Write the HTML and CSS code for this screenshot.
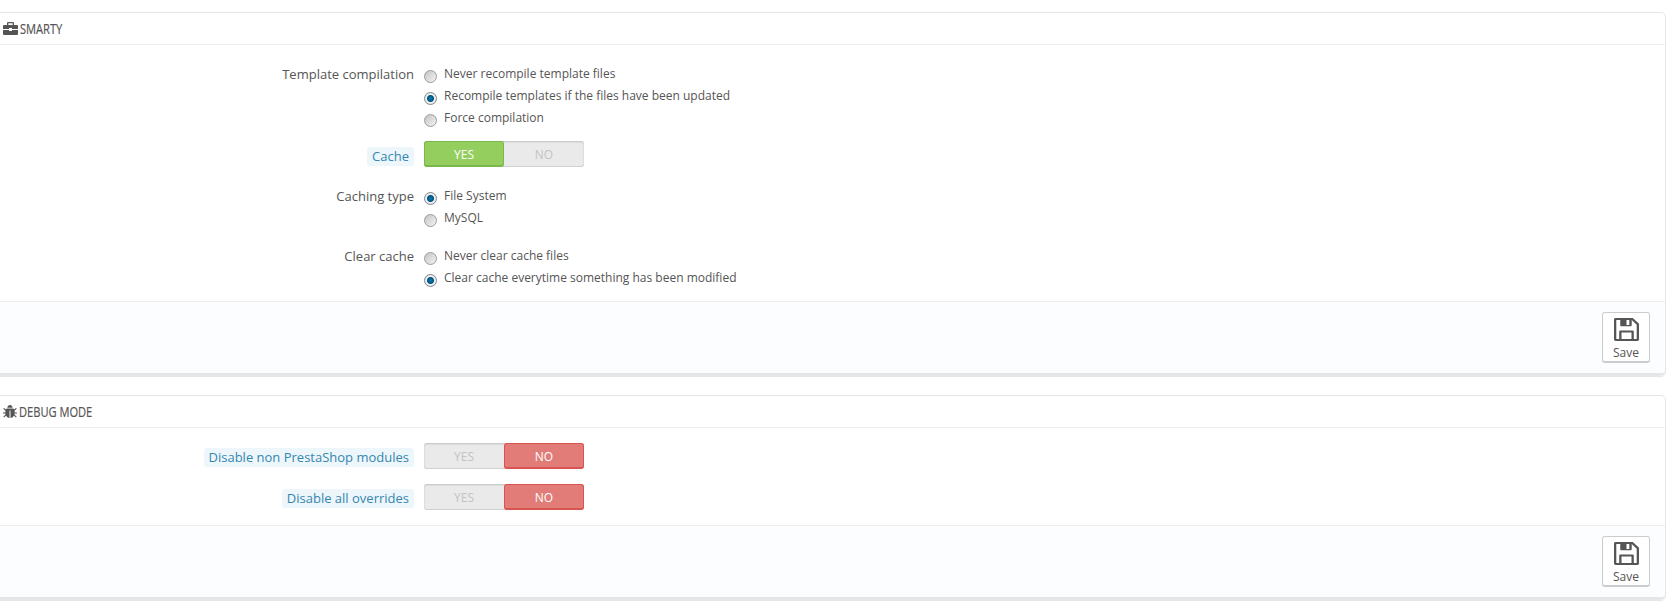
FILE: index.html
```html
<!DOCTYPE html>
<html>
<head>
    <meta charset="UTF-8">
    <title>Performance</title>
    <link rel="stylesheet" href="styles.css">
</head>
<body>
<div class="panel panel-smarty">
    <h3 class="panel-heading">
        <svg class="head-icon" width="15" height="13" viewBox="0 0 15 13"><path d="M5 0h5a1 1 0 0 1 1 1v2h3a1 1 0 0 1 1 1v3H9V6H6v1H0V4a1 1 0 0 1 1-1h3V1a1 1 0 0 1 1-1zm.3 1.3V3h4.400V1.300zM0 8h6v1h3V8h6v4a1 1 0 0 1-1 1H1a1 1 0 0 1-1-1z"/></svg>
        <span class="head-text">SMARTY</span>
    </h3>
    <div class="form-body">
        <div class="row row-radio">
            <label class="row-label">Template compilation</label>
            <div class="radio-list">
                <div class="radio"><input type="radio" name="compile"><span>Never recompile template files</span></div>
                <div class="radio"><input type="radio" name="compile" checked><span>Recompile templates if the files have been updated</span></div>
                <div class="radio"><input type="radio" name="compile"><span>Force compilation</span></div>
            </div>
        </div>
        <div class="row row-switch">
            <label class="row-label"><span class="hint">Cache</span></label>
            <div class="switch">
                <span class="opt on-yes">YES</span>
                <span class="opt">NO</span>
            </div>
        </div>
        <div class="row row-radio row-gap">
            <label class="row-label">Caching type</label>
            <div class="radio-list">
                <div class="radio"><input type="radio" name="ctype" checked><span>File System</span></div>
                <div class="radio"><input type="radio" name="ctype"><span>MySQL</span></div>
            </div>
        </div>
        <div class="row row-radio row-gap2">
            <label class="row-label">Clear cache</label>
            <div class="radio-list">
                <div class="radio"><input type="radio" name="clear"><span>Never clear cache files</span></div>
                <div class="radio"><input type="radio" name="clear" checked><span>Clear cache everytime something has been modified</span></div>
            </div>
        </div>
    </div>
    <div class="panel-footer">
        <button class="save-btn">
            <svg width="25" height="25" viewBox="0 0 24 24" preserveAspectRatio="none"><path fill-rule="evenodd" d="M1.500 0H18l6 6v16.500a1.500 1.500 0 0 1-1.500 1.500h-21A1.500 1.500 0 0 1 0 22.500v-21A1.500 1.500 0 0 1 1.500 0zM6 2.200H2.200v19.600H5V14a1 1 0 0 1 1-1h12a1 1 0 0 1 1 1v7.800h2.800V7l-4.800-4.800v5.300a1 1 0 0 1-1 1H7a1 1 0 0 1-1-1zM7.200 15.200v6.600h9.600v-6.600zM12 2.200v5h2.700v-5z"/></svg>
            <span>Save</span>
        </button>
    </div>
</div>

<div class="panel panel-debug">
    <h3 class="panel-heading">
        <svg class="head-icon" width="14" height="13" viewBox="0 0 14 13"><path d="M4.300 2.800C4.500 1.200 5.600 0 7 0s2.500 1.200 2.700 2.800zM3.600 3.600h6.800l.7 1L13 3l.8.7-2.200 2.100v1.600H14v1h-2.400l-.1 1 2.200 2.300-.8.700-1.800-1.900C10.300 12 9 13 7.500 13V5.500h-1V13C5 13 3.700 12 3 10.500l-1.900 1.900-.8-.7 2.200-2.300-.1-1H0v-1h2.400V5.800L.2 3.700 1 3l1.900 1.600z"/></svg>
        <span class="head-text">DEBUG MODE</span>
    </h3>
    <div class="form-body form-debug">
        <div class="row row-switch-first">
            <label class="row-label"><span class="hint">Disable non PrestaShop modules</span></label>
            <div class="switch">
                <span class="opt">YES</span>
                <span class="opt on-no">NO</span>
            </div>
        </div>
        <div class="row row-switch-next">
            <label class="row-label"><span class="hint">Disable all overrides</span></label>
            <div class="switch">
                <span class="opt">YES</span>
                <span class="opt on-no">NO</span>
            </div>
        </div>
    </div>
    <div class="panel-footer">
        <button class="save-btn">
            <svg width="25" height="25" viewBox="0 0 24 24" preserveAspectRatio="none"><path fill-rule="evenodd" d="M1.500 0H18l6 6v16.500a1.500 1.500 0 0 1-1.500 1.500h-21A1.500 1.500 0 0 1 0 22.500v-21A1.500 1.500 0 0 1 1.500 0zM6 2.200H2.200v19.600H5V14a1 1 0 0 1 1-1h12a1 1 0 0 1 1 1v7.800h2.800V7l-4.800-4.800v5.300a1 1 0 0 1-1 1H7a1 1 0 0 1-1-1zM7.200 15.200v6.600h9.600v-6.600zM12 2.200v5h2.700v-5z"/></svg>
            <span>Save</span>
        </button>
    </div>
</div>
</body>
</html>
```

FILE: styles.css
```css
* {
    box-sizing: border-box;
}

html, body {
    margin: 0;
    padding: 0;
    overflow: hidden;
}

body {
    background: #fff;
    font-family: "Open Sans", "Liberation Sans", sans-serif;
    font-size: 12px;
    color: #555;
}

.panel {
    margin: 12px 6px 0 -10px;
    border: 1px solid #e6e6e6;
    border-radius: 5px;
    background: #fff;
}

.panel-debug {
    margin-top: 18px;
}

.panel-heading {
    display: flex;
    align-items: center;
    gap: 2px;
    margin: 0;
    padding-left: 12px;
    height: 32px;
    border-bottom: 1px solid #eee;
    font-size: 15px;
    font-weight: normal;
    color: #555;
}

.head-text {
    margin-bottom: 2px;
    transform: scaleX(.74);
    transform-origin: left center;
    -webkit-text-stroke: .2px #555;
}

.head-icon {
    fill: #555;
    flex: none;
}

.form-body {
    padding: 19px 0 11px;
}

.form-debug {
    padding: 15px 0 15px;
}

.row {
    display: flex;
    align-items: flex-start;
}

.row-label {
    flex: none;
    width: 433px;
    padding-right: 10px;
    text-align: right;
    font-size: 13px;
    line-height: 22px;
}

.row-radio .row-label {
    line-height: 20px;
}

.radio-list {
    display: flex;
    flex-direction: column;
}

.radio {
    display: flex;
    align-items: center;
    height: 22px;
    color: #555;
}

.radio span {
    margin-bottom: 4px;
}

.radio input {
    appearance: none;
    -webkit-appearance: none;
    flex: none;
    margin: 2px 7px 0 0;
    width: 13px;
    height: 13px;
    border: 1px solid #9c9c9c;
    border-radius: 50%;
    background: linear-gradient(135deg, #c4c4c4, #f4f4f4);
}

.radio input:checked {
    background: radial-gradient(circle, #0a7fb5 0, #00527c 3px, #f2f2f2 4px, #d8d8d8 100%);
    border-color: #7d8a92;
}

.row-switch {
    margin-top: 11px;
    align-items: center;
    height: 26px;
}

.row-gap {
    margin-top: 19px;
}

.row-gap2 {
    margin-top: 16px;
}

.row-switch-first,
.row-switch-next {
    align-items: center;
    height: 26px;
}

.row-switch-next {
    margin-top: 15px;
}

.hint {
    display: inline-block;
    margin-top: 4px;
    padding: 0 5px;
    height: 19px;
    line-height: 19px;
    border-radius: 3px;
    background: #edf7fb;
    color: #3586ae;
}

.row-switch .hint {
    margin-top: 6px;
}

.switch {
    display: flex;
    width: 160px;
    height: 26px;
    border-radius: 3px;
    background: #eaeaea;
    box-shadow: inset 0 1px 2px rgba(0,0,0,.18), inset 0 -1px 0 rgba(0,0,0,.1);
}

.opt {
    flex: none;
    width: 50%;
    text-align: center;
    line-height: 27px;
    color: #c3c3c3;
}

.on-yes {
    border: 1px solid #79b84a;
    border-bottom-width: 2px;
    border-radius: 3px;
    background: #93ce5e;
    line-height: 25px;
    color: #fff;
}

.on-no {
    border: 1px solid #d9534f;
    border-bottom-width: 2px;
    border-radius: 3px;
    background: #e27c79;
    line-height: 25px;
    color: #fff;
}

.panel-footer {
    display: flex;
    justify-content: flex-end;
    padding: 10px 15px 10px 0;
    height: 75px;
    border-top: 1px solid #eee;
    border-bottom: 3px solid #e6e6e6;
    border-radius: 0 0 5px 5px;
    background: #fcfdfe;
}

.save-btn {
    display: flex;
    flex-direction: column;
    align-items: center;
    padding: 5px 0 0;
    width: 48px;
    height: 51px;
    border: 1px solid #ccc;
    border-bottom-width: 2px;
    border-radius: 3px;
    background: #fff;
    font-family: inherit;
    font-size: 12px;
    line-height: 16px;
    color: #555;
}

.save-btn svg {
    fill: #555;
    margin-bottom: 4px;
}
```
